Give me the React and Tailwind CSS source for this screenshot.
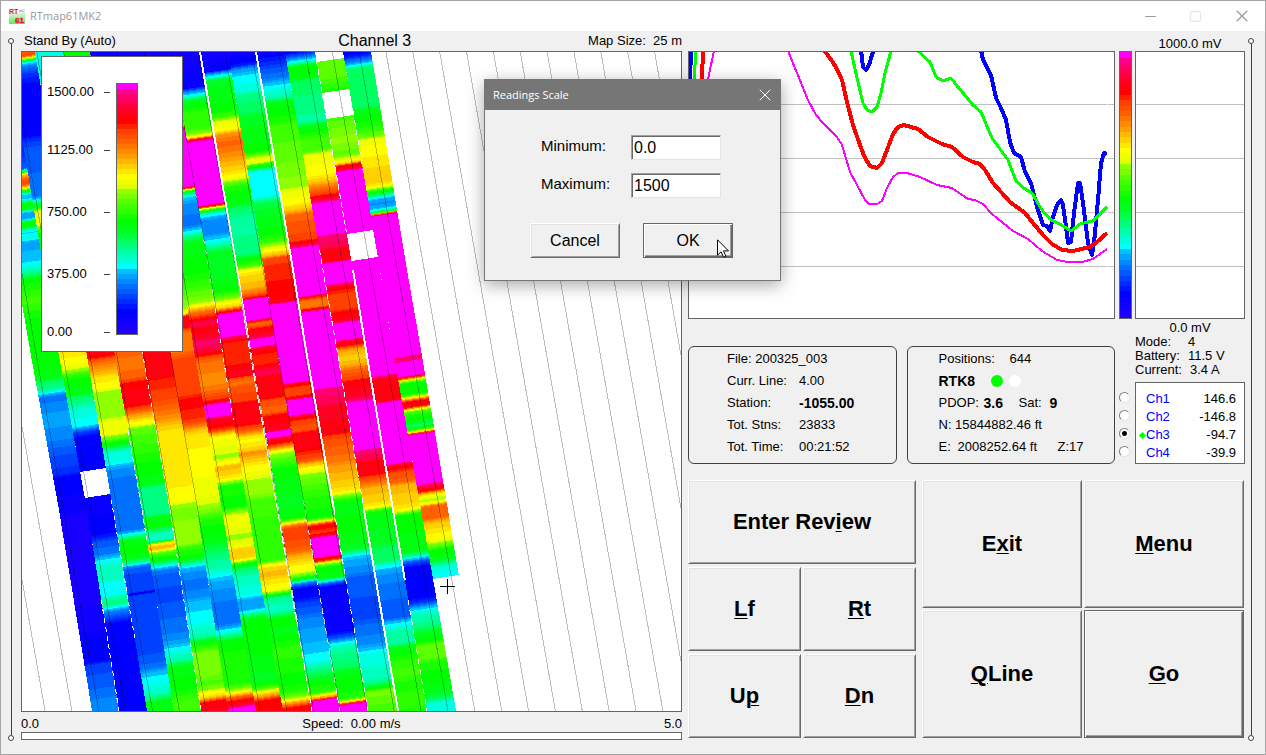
import { useState } from 'react'
import { Minus, Square, X } from 'lucide-react'

// 50 step palette, anchor colours by level (0 = low, 49 = over range)
const ANCHORS = [
  [0, 32, 0, 255], [4, 0, 0, 255], [7, 0, 64, 255], [10, 0, 136, 255], [12, 0, 192, 255],
  [13, 0, 255, 255], [16, 0, 255, 160], [18, 0, 255, 96], [20, 0, 255, 32], [22, 0, 255, 0],
  [25, 64, 255, 0], [28, 144, 255, 0], [29, 224, 255, 0], [31, 255, 255, 0], [33, 255, 208, 0],
  [35, 255, 160, 0], [38, 255, 96, 0], [40, 255, 64, 0], [41, 255, 32, 0], [42, 255, 0, 0],
  [44, 255, 0, 32], [47, 255, 0, 112], [48, 255, 0, 144],
]

const levelColor = (level) => {
  if (level >= 49) return '#ff00ff'
  const i = ANCHORS.findIndex((a) => a[0] > level)
  if (i === -1) return '#ff0090'
  const [l0, ...from] = ANCHORS[i - 1]
  const [l1, ...to] = ANCHORS[i]
  const t = (level - l0) / (l1 - l0)
  return `rgb(${from.map((c, n) => Math.round(c + (to[n] - c) * t)).join(',')})`
}

const PALETTE = Array.from({ length: 50 }, (_, i) => levelColor(i))

// x of every swath edge at the given y
const EDGE_Y = [52, 270, 350, 510, 711]
const EDGES = [
  [-21, 16, 30, 59, 92], [8, 44, 58, 87, 119], [35, 72, 86, 113, 147], [63, 100, 114, 142, 174],
  [90, 128, 142, 170, 201], [118, 156, 170, 197, 228], [145, 182, 194, 222, 256],
  [172, 209, 222, 248, 283], [200, 237, 250, 278, 312], [228, 264, 277, 305, 340],
  [256, 293, 306, 334, 368], [285, 323, 337, 364, 398], [315, 353, 366, 393, 427],
  [343, 380, 393, 421, 456], [371, 407, 421, 448, 481],
]

// y, level pairs per swath, -1 = no data
const SWATHS = [
  [52, 5, 155, 6, 170, 8, 173, 20, 176, 33, 180, 38, 185, 40, 189, 32, 192, 22, 196, 12, 200, 12, 205, 22, 210, 20, 214, 11, 219, 11, 223, 21, 227, 22, 230, 15, 233, 12, 238, 14, 243, 11, 260, 12, 267, 14, 275, 18, 280, 22, 300, 25, 320, 22, 363, 22, 377, 21, 382, 18, 390, 16, 393, 12, 397, 9, 417, 11, 437, 10, 450, 8, 460, 7, 473, 6, 477, 4, 510, 3, 517, 1, 583, 1, 627, 2, 643, 4, 662, 4, 665, 7, 683, 8, 703, 10, 716, 10],
  [52, 38, 56, 40, 59, 30, 61, 20, 63, 13, 68, 9, 75, 6, 85, 4, 135, 4, 142, 7, 150, 8, 195, 9, 198, 13, 202, 18, 206, 22, 210, 30, 222, 30, 226, 26, 232, 22, 310, 22, 340, 32, 350, 32, 363, 31, 370, 28, 375, 24, 380, 22, 393, 21, 397, 18, 405, 16, 410, 14, 425, 13, 428, 10, 433, 6, 437, 4, 469, 4, 470, -1, 496, -1, 497, 3, 533, 4, 538, 6, 542, 8, 553, 9, 558, 12, 563, 14, 567, 15, 580, 15, 583, 13, 595, 13, 598, 16, 603, 17, 607, 14, 610, 10, 617, 7, 623, 4, 716, 4],
  [52, 14, 100, 14, 300, 43, 350, 43, 357, 42, 360, 38, 370, 35, 377, 32, 387, 31, 392, 28, 417, 28, 422, 30, 433, 30, 438, 26, 443, 22, 448, 17, 453, 14, 460, 14, 465, 12, 470, 10, 483, 9, 530, 9, 533, 12, 536, 16, 540, 21, 550, 22, 557, 21, 562, 17, 565, 12, 568, 8, 577, 7, 591, 7, 592, 4, 594, 4, 595, 7, 650, 7, 667, 9, 673, 12, 680, 13, 693, 15, 698, 18, 703, 21, 716, 21],
  [52, 22, 300, 38, 350, 38, 363, 37, 377, 38, 383, 42, 393, 43, 403, 43, 408, 40, 415, 35, 420, 32, 425, 30, 428, 26, 440, 25, 457, 23, 467, 22, 483, 21, 487, 17, 513, 17, 518, 21, 525, 22, 530, 18, 533, 15, 540, 15, 542, 25, 543, 31, 547, 34, 550, 31, 553, 25, 558, 22, 563, 17, 567, 12, 570, 9, 577, 8, 597, 7, 607, 8, 630, 9, 643, 11, 652, 14, 660, 16, 667, 21, 687, 22, 703, 25, 716, 24],
  [52, 3, 100, 3, 300, 43, 375, 43, 380, 41, 397, 40, 407, 38, 417, 36, 423, 34, 432, 32, 473, 32, 500, 31, 505, 28, 510, 27, 530, 28, 543, 28, 548, 24, 557, 22, 562, 18, 565, 14, 568, 11, 583, 9, 597, 10, 603, 12, 620, 13, 637, 16, 642, 21, 647, 24, 653, 27, 673, 27, 683, 25, 690, 28, 693, 31, 697, 33, 699, 37, 702, 43, 716, 44],
  [52, 2, 150, 2, 290, 24, 310, 28, 315, 31, 317, 40, 320, 43, 328, 43, 333, 37, 350, 37, 360, 40, 393, 40, 400, 42, 417, 41, 423, 39, 430, 34, 435, 32, 460, 31, 493, 30, 500, 29, 508, 28, 513, 26, 520, 23, 540, 21, 547, 19, 557, 17, 570, 15, 578, 12, 583, 11, 607, 9, 623, 9, 627, 11, 632, 14, 637, 18, 642, 22, 660, 23, 683, 23, 688, 26, 692, 30, 695, 35, 698, 40, 702, 43, 706, 46, 708, 50, 716, 50],
  [52, 2, 80, 2, 100, 22, 117, 24, 126, 30, 130, 43, 133, 50, 187, 50, 189, 43, 190, 32, 193, 20, 197, 13, 205, 10, 225, 9, 232, 13, 238, 18, 245, 21, 270, 22, 285, 24, 302, 28, 306, 31, 310, 36, 313, 38, 317, 41, 320, 43, 323, 46, 328, 43, 337, 44, 342, 47, 350, 45, 353, 43, 357, 39, 363, 37, 383, 36, 392, 38, 398, 40, 402, 43, 404, 50, 415, 50, 418, 45, 423, 43, 430, 40, 433, 34, 437, 31, 450, 29, 457, 28, 463, 31, 467, 34, 477, 32, 482, 28, 485, 23, 507, 22, 513, 28, 517, 30, 525, 30, 537, 28, 547, 30, 548, 33, 557, 33, 560, 30, 563, 24, 568, 18, 577, 15, 593, 14, 600, 11, 608, 11, 612, 14, 617, 20, 622, 22, 647, 22, 680, 20, 687, 24, 692, 31, 697, 37, 700, 42, 716, 43],
  [52, 2, 87, 3, 90, 8, 95, 13, 100, 20, 113, 24, 127, 24, 133, 27, 137, 33, 139, 43, 141, 50, 203, 50, 206, 43, 207, 33, 210, 22, 213, 14, 220, 10, 233, 10, 240, 13, 247, 17, 252, 20, 273, 20, 290, 22, 297, 26, 302, 30, 307, 33, 310, 40, 312, 44, 314, 50, 335, 50, 337, 46, 340, 43, 343, 41, 363, 41, 367, 43, 375, 44, 378, 39, 383, 37, 387, 39, 400, 40, 405, 43, 422, 43, 427, 40, 432, 37, 435, 33, 440, 31, 450, 33, 453, 36, 457, 34, 467, 31, 475, 30, 480, 28, 493, 28, 500, 25, 533, 24, 560, 24, 563, 28, 567, 33, 575, 34, 580, 32, 588, 31, 592, 27, 595, 21, 598, 16, 610, 15, 615, 18, 618, 22, 633, 21, 650, 24, 680, 22, 690, 23, 697, 27, 700, 31, 703, 36, 707, 42, 716, 44],
  [52, 2, 70, 3, 73, 10, 77, 15, 80, 20, 110, 22, 117, 25, 122, 30, 130, 31, 135, 36, 143, 38, 155, 36, 163, 34, 173, 32, 178, 30, 182, 26, 187, 23, 203, 21, 208, 18, 220, 16, 253, 17, 260, 22, 267, 26, 270, 31, 277, 33, 287, 34, 292, 37, 297, 41, 299, 50, 319, 50, 321, 43, 322, 38, 325, 38, 328, 42, 337, 45, 339, 50, 345, 50, 348, 44, 355, 41, 363, 41, 367, 44, 373, 46, 377, 43, 397, 43, 400, 39, 412, 38, 415, 42, 430, 44, 432, 50, 436, 50, 438, 44, 443, 42, 447, 36, 450, 31, 453, 28, 460, 25, 470, 22, 503, 20, 518, 22, 522, 30, 525, 36, 528, 40, 537, 40, 550, 38, 555, 35, 563, 32, 572, 30, 577, 24, 580, 18, 583, 9, 588, 4, 597, 4, 603, 7, 612, 8, 620, 10, 637, 11, 647, 12, 660, 13, 667, 16, 675, 19, 683, 22, 692, 24, 695, 31, 698, 36, 699, 44, 700, 50, 716, 50],
  [52, 2, 65, 5, 68, 10, 77, 13, 90, 14, 95, 17, 110, 18, 117, 20, 150, 22, 155, 26, 158, 30, 162, 30, 164, 24, 167, 21, 170, 15, 173, 13, 195, 13, 198, 15, 203, 19, 233, 22, 240, 24, 245, 28, 250, 31, 255, 34, 258, 40, 270, 41, 290, 42, 302, 43, 303, 50, 382, 50, 383, 44, 388, 40, 395, 40, 397, 43, 400, 50, 413, 50, 417, 43, 420, 40, 430, 39, 433, 43, 447, 43, 452, 41, 460, 39, 463, 34, 470, 30, 475, 27, 487, 25, 500, 23, 517, 22, 521, 30, 523, 36, 525, 43, 532, 40, 535, 43, 537, 50, 555, 50, 557, 44, 560, 40, 562, 30, 567, 22, 577, 21, 580, 15, 583, 8, 587, 3, 630, 3, 633, 5, 638, 8, 643, 13, 648, 16, 667, 18, 672, 21, 697, 23, 700, 28, 702, 36, 704, 50, 716, 50],
  [52, 3, 63, 6, 70, 8, 77, 9, 83, 12, 90, 14, 98, 16, 103, 21, 120, 23, 127, 25, 157, 26, 167, 27, 187, 28, 192, 30, 203, 31, 210, 34, 215, 38, 227, 39, 240, 40, 243, 43, 247, 48, 249, 50, 295, 50, 297, 42, 300, 37, 307, 37, 309, 43, 312, 50, 387, 50, 388, 47, 403, 46, 407, 44, 432, 43, 435, 40, 450, 38, 460, 37, 467, 35, 477, 34, 490, 32, 494, 29, 498, 24, 503, 21, 527, 22, 548, 20, 552, 17, 555, 13, 560, 11, 572, 10, 577, 8, 617, 7, 627, 9, 643, 10, 648, 12, 655, 14, 677, 15, 683, 17, 688, 22, 691, 27, 700, 26, 707, 25, 716, 26],
  [52, 4, 57, 9, 62, 15, 67, 22, 75, 22, 82, 18, 107, 17, 120, 16, 127, 21, 140, 25, 150, 25, 155, 30, 173, 31, 180, 33, 187, 37, 193, 40, 198, 44, 202, 48, 203, 50, 232, 50, 235, 47, 247, 46, 249, 43, 260, 43, 263, 50, 283, 50, 284, 46, 288, 42, 295, 40, 308, 40, 312, 42, 320, 44, 323, 50, 338, 50, 340, 45, 345, 42, 349, 35, 357, 33, 363, 34, 370, 38, 378, 40, 382, 43, 395, 44, 400, 47, 402, 50, 448, 50, 450, 47, 457, 46, 462, 43, 473, 43, 477, 40, 483, 37, 488, 34, 500, 33, 507, 31, 510, 24, 513, 21, 542, 20, 550, 18, 560, 18, 565, 14, 570, 11, 587, 9, 610, 8, 618, 8, 622, 12, 627, 14, 633, 16, 643, 16, 647, 21, 663, 24, 673, 25, 683, 23, 700, 24, 716, 23],
  [52, -1, 60, -1, 61, 26, 75, 26, 90, 23, 91, -1, 117, -1, 118, 25, 123, 26, 140, 28, 153, 26, 160, 30, 163, 33, 165, 43, 169, 44, 171, 50, 231, 50, 232, -1, 259, -1, 260, 50, 375, 50, 376, 46, 380, 43, 400, 43, 403, 50, 462, 50, 465, 44, 470, 41, 473, 39, 482, 38, 485, 34, 500, 33, 508, 32, 512, 27, 515, 22, 550, 21, 555, 17, 558, 13, 561, 8, 567, 4, 597, 4, 603, 7, 608, 12, 613, 15, 625, 17, 632, 20, 640, 22, 645, 26, 657, 26, 663, 23, 690, 21, 698, 18, 703, 14, 716, 14],
  [52, 4, 56, 5, 60, 9, 65, 13, 68, 18, 105, 18, 112, 21, 130, 24, 137, 27, 140, 30, 150, 31, 163, 32, 172, 33, 182, 33, 187, 30, 190, 24, 195, 17, 198, 12, 203, 10, 208, 12, 212, 20, 213, 32, 214, 43, 215, 50, 355, 50, 356, 47, 361, 47, 362, 50, 375, 50, 377, 43, 379, 32, 383, 22, 393, 22, 397, 30, 400, 40, 402, 43, 406, 43, 408, 33, 412, 24, 422, 21, 425, 17, 427, 21, 430, 27, 432, 35, 433, 45, 434, 50, 482, 50, 485, 46, 490, 42, 493, 33, 497, 29, 500, 28, 503, 31, 506, 38, 517, 38, 521, 34, 530, 32, 540, 30, 545, 26, 550, 22, 558, 21, 563, 17, 567, 14, 576, 13, 577, -1, 716, -1],
]

const edgeX = (edge, y) => {
  let i = 1
  while (i < EDGE_Y.length - 1 && EDGE_Y[i] < y) i++
  const t = (y - EDGE_Y[i - 1]) / (EDGE_Y[i] - EDGE_Y[i - 1])
  return edge[i - 1] + (edge[i] - edge[i - 1]) * t
}

const levelAt = (knots, y) => {
  let i = 2
  while (i < knots.length - 2 && knots[i] < y) i += 2
  const [y0, v0, y1, v1] = knots.slice(i - 2, i + 2)
  if (v0 < 0 || v1 < 0) return v0 < 0 && v1 < 0 ? -1 : Math.max(v0, v1)
  return Math.round(v0 + (v1 - v0) * Math.min(1, Math.max(0, (y - y0) / (y1 - y0))))
}

// merge rows of one level into cells that tilt up to the right
const swathCells = (knots, s) => {
  const cells = []
  for (let y = 50; y < 715; y += 1) {
    const level = levelAt(knots, y + 0.5)
    const last = cells[cells.length - 1]
    if (last && last.level === level) last.end = y + 1
    else cells.push({ level, start: y, end: y + 1 })
  }
  return cells.filter((c) => c.level >= 0).map((c) => {
    const points = []
    for (let y = c.start; ; y = Math.min(y + 40, c.end)) {
      points.push([edgeX(EDGES[s], y + 2), y + 2])
      if (y >= c.end) break
    }
    for (let y = c.end; ; y = Math.max(y - 40, c.start)) {
      points.push([edgeX(EDGES[s + 1], y - 2), y - 2])
      if (y <= c.start) break
    }
    return { key: `${s}-${c.start}`, color: PALETTE[Math.min(c.level, 49)], points: points.map((p) => p.map((n) => n.toFixed(1)).join(',')).join(' ') }
  })
}

const CELLS = SWATHS.flatMap(swathCells)

// uncovered seams between swaths: edge, from, to, width, dash
const SEAMS = [
  [8, 52, 330, 2, 'none'], [8, 330, 620, 2, '8 3'], [10, 52, 510, 2, 'none'], [10, 510, 711, 1, '5 5'],
  [11, 250, 510, 1, '5 4'], [11, 510, 711, 2, 'none'], [12, 270, 580, 2, 'none'], [12, 60, 232, 1, '6 3'],
  [13, 110, 170, 1, '5 5'], [12, 600, 711, 1, '5 5'], [9, 500, 711, 1, '6 4'], [8, 620, 711, 1, '7 4'],
  [7, 240, 420, 1, '4 6'], [4, 350, 711, 1, '4 5'], [3, 430, 540, 1, '5 4'], [2, 500, 640, 1, '4 4'],
  [1, 600, 711, 1, '5 4'],
]

const TRACKS = Array.from({ length: 29 }, (_, i) => 386 + (i - 17) * 26.86)

const CURVES = [
  { color: '#0000ff', width: 4, lines: ['690,79 691,52', '861,50 863,67 866,70 869,65 872,55 874,50', '981,50 983,60 991,75 996,98 1001,108 1006,120 1010,142 1014,153 1021,157 1025,172 1031,183 1037,207 1043,225 1047,226 1050,231 1053,217 1057,205 1061,200 1063,205 1066,227 1068,243 1071,242 1074,213 1078,183 1080,183 1083,203 1088,243 1090,249 1092,255 1094,243 1098,200 1101,163 1104,153 1107,154'] },
  { color: '#ff00ff', width: 2, lines: ['708,79 714,51', '788,51 797,73 808,100 816,115 823,123 837,137 842,145 850,172 857,185 865,200 869,204 877,204 882,201 887,188 893,177 898,173 907,173 920,177 937,185 952,188 968,199 975,200 983,204 992,214 1013,231 1028,239 1042,251 1057,260 1068,262 1082,262 1093,259 1107,249'] },
  { color: '#ff0000', width: 4, lines: ['702,79 703,51', '824,50 832,61 837,69 842,80 847,102 853,125 860,145 865,158 870,166 877,168 882,163 887,150 893,134 898,127 904,125 918,129 928,137 942,144 952,147 963,157 973,162 980,164 985,170 993,183 1010,202 1025,213 1033,223 1043,235 1052,244 1062,250 1073,251 1090,247 1097,242 1107,233'] },
  { color: '#00ff00', width: 3, lines: ['694,79 696,51', '851,51 857,78 863,103 867,110 872,112 877,107 881,93 885,73 891,51', '918,51 930,62 936,77 943,81 951,78 958,87 973,105 981,112 992,138 1008,160 1016,181 1025,189 1032,193 1042,210 1050,219 1063,226 1071,231 1080,224 1093,221 1100,214 1107,207'] },
]

const GRID = [104, 158, 212, 266]

const channels = [
  { name: 'Ch1', value: '146.6' },
  { name: 'Ch2', value: '-146.8' },
  { name: 'Ch3', value: '-94.7' },
  { name: 'Ch4', value: '-39.9' },
]

const raised = 'border border-t-white border-l-white border-r-[#696969] border-b-[#696969] bg-[#f0f0f0] shadow-[inset_1px_1px_0_#e3e3e3,inset_-1px_-1px_0_#a0a0a0]'
const raisedDefault = 'border border-[#646464] bg-[#f0f0f0] shadow-[inset_1px_1px_0_#fff,inset_-1px_-1px_0_#696969,inset_-2px_-2px_0_#a0a0a0]'

function PadButton({ before = '', hot, after = '', className = '', active }) {
  return (
    <button className={`text-[22px] font-bold ${active ? raisedDefault : raised} ${className}`}>
      {before}<span className="underline decoration-1 underline-offset-2">{hot}</span>{after}
    </button>
  )
}

function ColorBar({ className }) {
  return (
    <div className={`flex flex-col-reverse border border-[#646464] ${className}`}>
      {PALETTE.map((color, i) => (
        <span key={i} className="flex-1" style={{ background: color }} />
      ))}
    </div>
  )
}

function Rail({ className }) {
  return (
    <div className={`flex flex-none flex-col items-center pt-[7px] pb-[13px] ${className}`}>
      <span className="size-[6px] rounded-full border border-[#404040] bg-white" />
      <span className="w-px flex-1 bg-[#404040]" />
      <span className="size-[6px] rounded-full border border-[#404040] bg-white" />
    </div>
  )
}

function SurveyMap() {
  return (
    <svg viewBox="22 52 659 659" preserveAspectRatio="none" shapeRendering="crispEdges" className="block h-full w-full">
      {CELLS.map((cell) => <polygon key={cell.key} points={cell.points} fill={cell.color} />)}
      {SEAMS.map(([e, from, to, width, dash]) => (
        <polyline
          key={`${e}-${from}`}
          points={[from, ...EDGE_Y.filter((y) => y > from && y < to), to].map((y) => `${edgeX(EDGES[e], y)},${y}`).join(' ')}
          fill="none" stroke="#fff" strokeWidth={width} strokeDasharray={dash}
        />
      ))}
      {TRACKS.map((x) => (
        <line key={x} x1={x} y1="52" x2={x + 115.7} y2="711" stroke="#000" strokeOpacity="0.26" />
      ))}
      <path d="M440 586.5h15M447.500 579v15" stroke="#000" />
    </svg>
  )
}

function Legend() {
  return (
    <div className="absolute top-1 left-[19px] flex h-[296px] w-[142px] border border-[#646464] bg-white pt-[26px] pl-[5px]">
      <div className="grid w-[63px] grid-rows-[58px_62px_62px_58px_18px] items-start">
        {['1500.00', '1125.00', '750.00', '375.00', '0.00'].map((label) => (
          <div key={label} className="flex h-[18px] items-center justify-between">
            <span>{label}</span>
            <span className="h-px w-[6px] bg-[#404040]" />
          </div>
        ))}
      </div>
      <ColorBar className="ml-[6px] h-[252px] w-[22px]" />
    </div>
  )
}

function Chart() {
  return (
    <svg viewBox="689 52 425 266" preserveAspectRatio="none" className="block h-full w-full">
      {GRID.map((y) => <line key={y} x1="689" x2="1114" y1={y + 0.5} y2={y + 0.5} stroke="#c0c0c0" />)}
      <line x1="1107.5" x2="1107.5" y1="52" y2="318" stroke="#fff" />
      {CURVES.map((curve) => curve.lines.map((points) => (
        <polyline key={points} points={points} fill="none" stroke={curve.color} strokeWidth={curve.width} strokeLinejoin="round" shapeRendering="crispEdges" />
      )))}
    </svg>
  )
}

function StatusPanels() {
  return (
    <div className="mt-[27px] grid h-[118px] grid-cols-2 gap-[10px] leading-[22px] whitespace-nowrap">
      <div className="rounded-[6px] border border-[#404040] pt-px pl-[38px]">
        <p>File: 200325_003</p>
        <dl className="grid grid-cols-[72px_auto]">
          <dt>Curr. Line:</dt><dd>4.00</dd>
          <dt>Station:</dt><dd className="text-[14px] font-bold">-1055.00</dd>
          <dt>Tot. Stns:</dt><dd>23833</dd>
          <dt>Tot. Time:</dt><dd>00:21:52</dd>
        </dl>
      </div>
      <div className="rounded-[6px] border border-[#404040] pt-px pl-[31px]">
        <p className="flex"><span className="w-[71px]">Positions:</span>644</p>
        <p className="flex items-center">
          <b className="w-[52px] text-[14px]">RTK8</b>
          <span className="size-3 rounded-full bg-[#00ff00]" />
          <span className="ml-[6px] size-3 rounded-full bg-white" />
        </p>
        <p className="flex">
          <span className="w-[45px]">PDOP:</span><b className="w-[35px] text-[14px]">3.6</b>
          <span className="w-[31px]">Sat:</span><b className="text-[14px]">9</b>
        </p>
        <p>N: 15844882.46 ft</p>
        <p className="flex"><span className="w-[19px]">E:</span><span className="w-[100px]">2008252.64 ft</span>Z:17</p>
      </div>
    </div>
  )
}

function ChannelList({ channel, onChange }) {
  return (
    <div className="mt-[5px] flex h-[82px]">
      <div className="w-4 pt-[6px]">
        {channels.map(({ name }) => (
          <div key={name} className="flex h-[18px] items-center">
            <input
              type="radio" name="channel" id={name} checked={channel === name} onChange={() => onChange(name)}
              className="size-[11px] appearance-none rounded-full border border-t-[#808080] border-r-[#e3e3e3] border-b-[#e3e3e3] border-l-[#808080] bg-white checked:bg-[radial-gradient(circle,#000_2px,#fff_3px)]"
            />
          </div>
        ))}
      </div>
      <div className="flex-1 border border-[#646464] bg-white pt-[7px] pr-2 pl-1">
        {channels.map(({ name, value }) => (
          <div key={name} className="flex h-[18px] items-center">
            <span className={`size-[5px] rotate-45 ${channel === name ? 'bg-[#00ff00]' : ''}`} />
            <label htmlFor={name} className="flex-1 pl-[1px] text-[#0000ff]">{name}</label>
            <span>{value}</span>
          </div>
        ))}
      </div>
    </div>
  )
}

function ScaleDialog() {
  const field = 'h-[25px] w-[90px] border border-t-[#a0a0a0] border-r-[#e3e3e3] border-b-[#e3e3e3] border-l-[#a0a0a0] bg-white pl-[2px] text-[16px] shadow-[inset_1px_1px_0_#696969] outline-none'
  return (
    <div role="dialog" aria-label="Readings Scale" className="absolute top-[78px] left-[483px] w-[297px] border border-[#767676] bg-[#f0f0f0] shadow-[0_4px_16px_rgba(0,0,0,0.35)]">
      <div className="flex h-[30px] items-center justify-between bg-[#767676] pr-[5px] pl-2 font-['Open_Sans',sans-serif] text-[11px] text-white">
        Readings Scale
        <button aria-label="Close dialog"><X size={20} strokeWidth={1.2} /></button>
      </div>
      <form onSubmit={(e) => e.preventDefault()} className="pt-[25px] pb-[22px]">
        <div className="grid grid-cols-[90px_90px] gap-y-[13px] pl-[56px] text-[15px]">
          <label htmlFor="min" className="leading-[21px]">Minimum:</label>
          <input id="min" defaultValue="0.0" className={field} />
          <label htmlFor="max" className="leading-[21px]">Maximum:</label>
          <input id="max" defaultValue="1500" className={field} />
        </div>
        <div className="mt-[25px] flex gap-[23px] pl-[45px] text-[16px]">
          <button className={`h-[35px] w-[90px] ${raised}`}>Cancel</button>
          <button className={`h-[35px] w-[90px] ${raisedDefault}`}>OK</button>
        </div>
      </form>
      <svg viewBox="0 0 12 19" className="absolute top-[159px] left-[232px] h-[19px] w-3">
        <path d="M.5.8v15.400l3.600-3.400 2.500 5.500 2.300-1-2.400-5.400h5z" fill="#fff" stroke="#000" strokeWidth="1" />
      </svg>
    </div>
  )
}

export default function App() {
  const [channel, setChannel] = useState('Ch3')

  return (
    <div className="relative flex h-screen min-h-[640px] flex-col border border-[#a5a5a5] bg-[#f0f0f0] font-['Liberation_Sans',Arial,sans-serif] text-[13px] leading-[14px] text-black">
      <header className="flex h-[30px] flex-none items-center bg-white pl-2 font-['Open_Sans',sans-serif] text-[11px] text-[#999]">
        <svg viewBox="0 0 16 16" className="mr-[5px] size-4 overflow-visible">
          <defs>
            <linearGradient id="logo" x1="0" y1="0" x2="0" y2="1">
              <stop offset="0" stopColor="#e8f4e8" />
              <stop offset="1" stopColor="#5fe85f" />
            </linearGradient>
          </defs>
          <rect y="4" width="16" height="12" fill="url(#logo)" />
          <text x="0" y="6" fontSize="7" fontWeight="700" fill="#e01830" fontFamily="Liberation Sans">RT</text>
          <text x="10" y="4" fontSize="3" fill="#667" fontFamily="Liberation Sans">mk2</text>
          <text x="6" y="15" fontSize="8" fontWeight="700" fill="#e01830" stroke="#e01830" strokeWidth="0.4" fontFamily="Liberation Sans">61</text>
        </svg>
        <span className="flex-1">RTmap61MK2</span>
        <button aria-label="Minimize" className="flex w-[45px] justify-center"><Minus size={17} strokeWidth={1.4} /></button>
        <button aria-label="Maximize" className="flex w-[45px] justify-center text-[#e4e4e4]"><Square size={13} strokeWidth={2} /></button>
        <button aria-label="Close" className="flex w-[47px] justify-center"><X size={20} strokeWidth={1.4} /></button>
      </header>

      <div className="flex min-h-0 flex-1">
        <Rail className="w-5" />

        <main className="flex min-w-0 flex-[661_1_0%] flex-col pb-[14px]">
          <div className="grid h-5 flex-none grid-cols-[48fr_22fr_30fr] items-center">
            <span className="pl-[3px]">Stand By (Auto)</span>
            <h1 className="text-[16px]">Channel 3</h1>
            <span className="text-right whitespace-pre">Map Size:  25 m</span>
          </div>
          <div className="relative min-h-0 flex-1 border border-[#646464] bg-white">
            <SurveyMap />
            <Legend />
          </div>
          <div className="grid h-5 flex-none grid-cols-3 items-center pt-1">
            <span>0.0</span>
            <span className="text-center whitespace-pre">Speed:  0.00 m/s</span>
            <span className="text-right">5.0</span>
          </div>
          <div className="h-2 flex-none border border-[#646464] bg-white" />
        </main>

        <aside className="ml-[6px] flex min-w-0 flex-[557_1_0%] flex-col pb-4">
          <div className="flex flex-none gap-1">
            <div className="min-w-0 flex-1 pt-5">
              <div className="h-[268px] border border-[#646464] bg-white"><Chart /></div>
              <StatusPanels />
            </div>
            <div className="w-[126px] flex-none">
              <p className="h-5 pt-[6px] pl-4 text-center">1000.0 mV</p>
              <div className="flex h-[268px] gap-[3px]">
                <ColorBar className="w-[13px]" />
                <div className="flex-1 border border-[#646464] bg-white">
                  <svg viewBox="0 52 108 266" preserveAspectRatio="none" className="block h-full w-full">
                    {GRID.map((y) => <line key={y} x1="0" x2="108" y1={y + 0.5} y2={y + 0.5} stroke="#c0c0c0" />)}
                  </svg>
                </div>
              </div>
              <p className="h-4 pt-[2px] pl-4 text-center">0.0 mV</p>
              <dl className="grid grid-cols-[53px_auto] pl-4">
                <dt>Mode:</dt><dd>4</dd>
                <dt>Battery:</dt><dd>11.5 V</dd>
                <dt>Current:</dt><dd className="pl-[2px]">3.4 A</dd>
              </dl>
              <ChannelList channel={channel} onChange={setChannel} />
            </div>
          </div>

          <div className="mt-4 flex min-h-0 flex-1 gap-[6px] pr-px">
            <div className="grid flex-[228_1_0%] grid-cols-2 grid-rows-3 gap-x-[2px] gap-y-[3px]">
              <PadButton before="Enter Rev" hot="i" after="ew" className="col-span-2" />
              <PadButton hot="L" after="f" />
              <PadButton hot="R" after="t" />
              <PadButton before="U" hot="p" />
              <PadButton hot="D" after="n" />
            </div>
            <div className="grid flex-[322_1_0%] grid-cols-2 grid-rows-2 gap-[2px]">
              <PadButton before="E" hot="x" after="it" />
              <PadButton hot="M" after="enu" />
              <PadButton hot="Q" after="Line" />
              <PadButton hot="G" after="o" active />
            </div>
          </div>
        </aside>

        <Rail className="mr-2 w-3" />
      </div>

      <ScaleDialog />
    </div>
  )
}
